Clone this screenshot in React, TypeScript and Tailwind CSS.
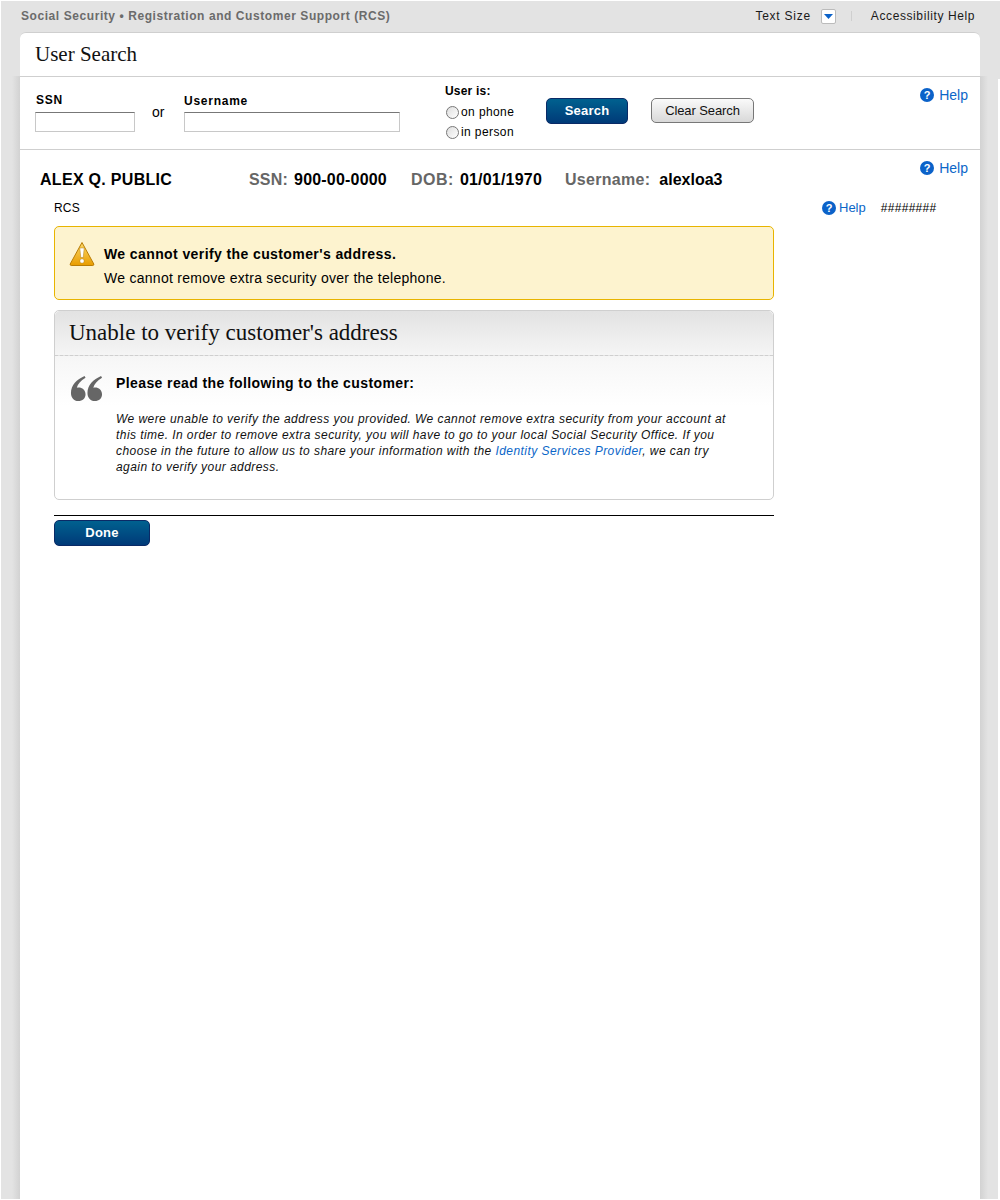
const sans = { fontFamily: '"Liberation Sans", Arial, sans-serif' };
const serif = { fontFamily: '"Liberation Serif", Georgia, serif' };

function HelpIcon() {
  return (
    <span className="flex h-[14px] w-[14px] items-center justify-center rounded-full bg-[#0b62c9] text-[11px] font-bold leading-none text-white">?</span>
  );
}

function Help({ gap = "gap-[5px]", size = "text-[14px]" }: { gap?: string; size?: string }) {
  return (
    <a className={`flex items-center ${gap} ${size} leading-[16px] text-[#0b66c8]`}>
      <HelpIcon />
      <span>Help</span>
    </a>
  );
}

function Radio({ label }: { label: string }) {
  return (
    <div className="flex h-[20px] items-center pl-[1px] text-[12px] tracking-[0.4px] text-black">
      <span className="mr-[2px] h-[13px] w-[13px] rounded-full border border-[#777] bg-[linear-gradient(135deg,#ddd,#fff)]" />
      {label}
    </div>
  );
}

function BlueButton({ label, w }: { label: string; w: string }) {
  return (
    <button className={`${w} h-[26px] rounded-[5px] border border-[#0a2a66] bg-[linear-gradient(#00618f,#003a78)] text-[13px] font-bold tracking-[0.2px] text-white`}>
      {label}
    </button>
  );
}

export default function App() {
  return (
    <div className="relative h-[1200px] w-[1000px] overflow-hidden border-b border-l border-t border-white bg-[#e3e3e3] text-black" style={sans}>
      <div className="absolute bottom-0 left-[11px] top-[75px] w-[8px] bg-[linear-gradient(90deg,#e3e3e3,#d2d2d2)]" />
      <div className="absolute bottom-0 right-[12px] top-[75px] w-[8px] bg-[linear-gradient(270deg,#e3e3e3,#d2d2d2)]" />
      <div className="absolute bottom-0 right-0 top-[78px] w-[2px] bg-white" />
      <div className="relative flex flex-col pl-[19px] pr-[20px]">
        <header className="flex h-[31px] items-center justify-between pb-[1px] pl-[1px]">
          <div className="text-[12px] font-bold tracking-[0.57px] text-[#6b6b6b]">Social Security • Registration and Customer Support (RCS)</div>
          <div className="flex items-center pr-[5px] text-[12px] tracking-[0.6px] text-[#1a1a1a]">
            <span className="tracking-[0.75px]">Text Size</span>
            <span className="ml-[10px] flex h-[15px] w-[15px] items-center justify-center rounded-[2px] border border-[#bbb] bg-white">
              <svg width="9" height="5" viewBox="0 0 9 5"><path d="M0 0h9L4.500 5z" fill="#0b62c9" /></svg>
            </span>
            <span className="ml-[15px] h-[10px] w-px bg-[#cfcfcf]" />
            <span className="ml-[19px]">Accessibility Help</span>
          </div>
        </header>

        <main className="h-[1168px] rounded-t-[6px] border-t border-[#cfcfcf] bg-white">
          <div className="flex h-[44px] items-center border-b border-[#cfcfcf] pl-[15px] text-[21px] text-[#111]" style={serif}>
            User Search
          </div>

          <section className="flex h-[73px] items-start border-b border-[#cfcfcf] pl-[15px] pr-[12px]">
            <div className="mt-[14px] flex w-[100px] flex-col">
              <label className="h-[21px] pl-[1px] text-[12px] font-bold tracking-[0.8px]">SSN</label>
              <input className="h-[20px] w-[100px] border border-[#c8c8c8] border-t-[#777] bg-white" />
            </div>
            <span className="ml-[17px] mt-[25px] w-[32px] text-[14px]">or</span>
            <div className="mt-[15px] flex w-[216px] flex-col">
              <label className="h-[20px] text-[12px] font-bold tracking-[0.75px]">Username</label>
              <input className="h-[20px] w-[216px] border border-[#c8c8c8] border-t-[#777] bg-white" />
            </div>
            <div className="ml-[45px] mt-[6px] flex w-[101px] flex-col">
              <div className="mb-[2px] h-[17px] text-[12px] font-bold leading-[16px] tracking-[0.2px]">User is:</div>
              <Radio label="on phone" />
              <Radio label="in person" />
            </div>
            <div className="mt-[21px]"><BlueButton label="Search" w="w-[82px]" /></div>
            <button className="ml-[23px] mt-[21px] h-[25px] w-[103px] rounded-[5px] border border-[#777] bg-[linear-gradient(#fafafa,#d8d8d8)] text-[13px] tracking-[-0.1px] text-[#111]">Clear Search</button>
            <div className="ml-auto mt-[10px]"><Help /></div>
          </section>

          <section className="flex h-[50px] items-start pl-[20px] pt-[20px] text-[16px] font-bold leading-[19px]">
            <span className="w-[209px] tracking-[0.3px]">ALEX Q. PUBLIC</span>
            <span className="text-[#666] tracking-[0.2px]">SSN:</span>
            <span className="ml-[6px] w-[117px] tracking-[0.2px]">900-00-0000</span>
            <span className="text-[#666] tracking-[0.5px]">DOB:</span>
            <span className="ml-[6px] w-[105px] tracking-[0.2px]">01/01/1970</span>
            <span className="text-[#666] tracking-[0.3px]">Username:</span>
            <span className="ml-[9px]">alexloa3</span>
            <div className="ml-auto mr-[12px] mt-[-10px] font-normal"><Help /></div>
          </section>

          <div className="flex pl-[34px]">
            <div className="w-[720px]">
              <div className="h-[26px] text-[12px] leading-[16px] tracking-[0.2px]">RCS</div>

              <div className="flex h-[74px] rounded-[5px] border border-[#e8b400] bg-[#fdf3cf] pl-[14px] pt-[14px]">
                <svg width="26" height="26" viewBox="0 0 26 26" className="mr-[9px] shrink-0">
                  <defs>
                    <linearGradient id="w" x1="0" y1="0" x2="0" y2="1">
                      <stop offset="0" stopColor="#fcd96a" />
                      <stop offset="1" stopColor="#e89c00" />
                    </linearGradient>
                  </defs>
                  <path d="M13 1.500 24.800 23a1.200 1.200 0 0 1-1 1.500H2.200a1.200 1.200 0 0 1-1-1.500z" fill="url(#w)" stroke="#b97c05" strokeLinejoin="round" />
                  <path d="M10.800 7h4.400l-1 9.500h-2.400z" fill="#fff" stroke="#a06a00" strokeWidth="0.4" />
                  <circle cx="13" cy="20" r="2.200" fill="#fff" stroke="#a06a00" strokeWidth="0.4" />
                </svg>
                <div className="pt-[1px] text-[14px] leading-[24px]">
                  <div className="font-bold tracking-[0.4px]">We cannot verify the customer's address.</div>
                  <div className="tracking-[0.27px]">We cannot remove extra security over the telephone.</div>
                </div>
              </div>

              <div className="mt-[10px] h-[190px] rounded-[5px] border border-[#cfcfcf] bg-white">
                <div className="flex h-[45px] items-center rounded-t-[5px] border-b border-dashed border-[#cfcfcf] bg-[linear-gradient(#e2e2e2,#f5f5f5)] pl-[14px] text-[23px] text-[#111]" style={serif}>
                  Unable to verify customer's address
                </div>
                <div className="flex bg-[linear-gradient(#f6f6f6,#ffffff_50px)] pl-[15px] pt-[17px]">
                  <svg width="33" height="27" viewBox="0 0 34 30" preserveAspectRatio="none" className="mr-[13px] mt-[2px] shrink-0">
                    <path d="M15 1C7 5 1 11 1 20c0 5 3 9 7.500 9S16 26 16 21.500 12.500 14 9 14c-.7 0-1.300 0-2 .3C8 10 11 6 16 3z" fill="#666" />
                    <path d="M32 1C24 5 18 11 18 20c0 5 3 9 7.500 9s7.500-3 7.500-7.500S29.500 14 26 14c-.7 0-1.300 0-2 .3C25 10 28 6 33 3z" fill="#666" />
                  </svg>
                  <div className="w-[618px]">
                    <div className="text-[14px] font-bold leading-[20px] tracking-[0.4px]">Please read the following to the customer:</div>
                    <p className="mt-[18px] text-[12px] italic leading-[16px] tracking-[0.44px] text-[#111]">
                      We were unable to verify the address you provided. We cannot remove extra security from your account at this time. In order to remove extra security, you will have to go to your local Social Security Office. If you choose in the future to allow us to share your information with the <a className="text-[#0b66c8]">Identity Services Provider</a>, we can try again to verify your address.
                    </p>
                  </div>
                </div>
              </div>

              <div className="mt-[15px] border-t border-black pt-[4px]">
                <BlueButton label="Done" w="w-[96px]" />
              </div>
            </div>

            <div className="ml-[48px] flex h-[18px] items-start text-[12px] leading-[16px]">
              <Help gap="gap-[3px]" size="text-[13px]" />
              <span className="ml-[15px] tracking-[0.3px]">########</span>
            </div>
          </div>
        </main>
      </div>
    </div>
  );
}
